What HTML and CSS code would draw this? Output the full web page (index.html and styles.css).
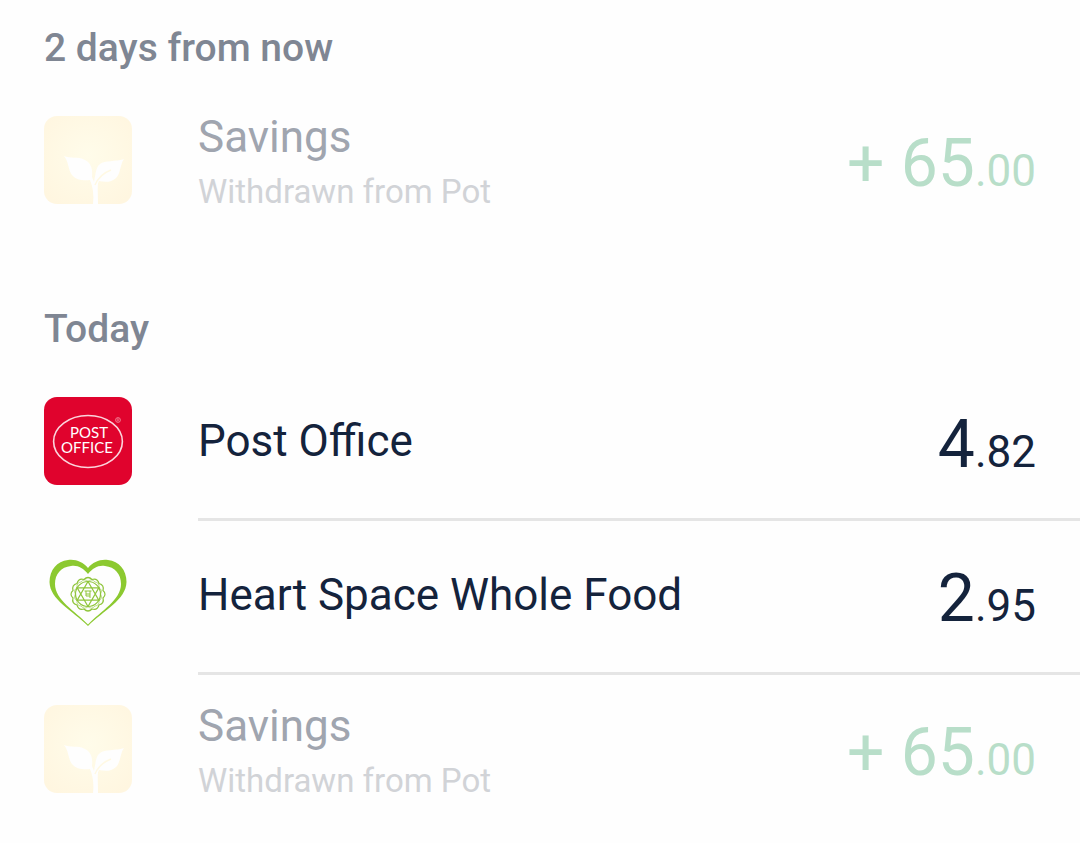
FILE: index.html
```html
<!DOCTYPE html>
<html lang="en">

	<head>
		<meta charset="UTF-8" />
		<meta name="viewport" content="width=device-width, initial-scale=1" />
		<title>Transactions</title>
		<link rel="stylesheet" href="styles.css">
	</head>

	<body>
		<!-- shared pot icon -->
		<svg class="defs" width="0" height="0" aria-hidden="true">
			<radialGradient id="potGlow" cx="50%" cy="45%" r="65%">
				<stop offset="0" stop-color="#fffcea" />
				<stop offset="1" stop-color="#fff6e0" />
			</radialGradient>
			<symbol id="pot" viewBox="0 0 88 88">
				<rect width="88" height="88" rx="13" fill="url(#potGlow)" />
				<path fill="#fefefe" d="M20 40C26 43 34 40 41 44C47 47 49 53 48 61L50 66C52 56 52 51 56 48C61 44 71 46 80 43C76 48 77 57 72 62C67 67 60 66 55 65C53 68 54 75 54 88H49C50 79 49 71 46 64C40 65 32 64 28 59C24 54 25 46 20 40Z" />
				<path fill="none" stroke="#fff9e4" stroke-width="1.5" d="M51 69C54 62 59 57 67 54" />
			</symbol>
		</svg>

		<div class="feed">
			<section class="day">
				<h2>2 days from now</h2>
				<ul>
					<li class="item pending">
						<svg class="icon" aria-hidden="true"><use href="#pot" /></svg>
						<div class="info">
							<div class="text">
								<p class="name">Savings</p>
								<p class="note">Withdrawn from Pot</p>
							</div>
							<p class="amount">+ 65<span>.00</span></p>
						</div>
					</li>
				</ul>
			</section>

			<section class="day">
				<h2>Today</h2>
				<ul>
					<li class="item">
						<svg class="icon" viewBox="0 0 88 88" aria-hidden="true">
							<rect width="88" height="88" rx="13" fill="#e0032d" />
							<ellipse cx="44" cy="44.5" rx="34.4" ry="26" fill="none" stroke="#fbd5dc" stroke-width="1.6" />
							<text class="logo" text-anchor="middle"><tspan x="45" y="41">POST</tspan><tspan x="43" y="56">OFFICE</tspan></text>
							<circle cx="74" cy="23" r="2.4" fill="none" stroke="#f296a6" stroke-width="0.8" />
							<path d="M73.3 24.5V21.7H74.2A0.7 0.7 0 0 1 74.2 23.1H73.3M74.2 23.1L75 24.5" fill="none" stroke="#f296a6" stroke-width="0.5" />
						</svg>
						<div class="info">
							<div class="text">
								<p class="name">Post Office</p>
							</div>
							<p class="amount">4<span>.82</span></p>
						</div>
					</li>
					<li class="item">
						<svg class="icon" viewBox="0 0 88 88" aria-hidden="true">
							<path fill="#8cc930" fill-rule="evenodd" d="M44 17C49 11 56 8 64 9C75 10 82.500 19 82.500 31C82 49 60 59 44 75C28 59 6 49 5.500 31C5.500 19 13 10 24 9C32 8 39 11 44 17ZM44 23C39 17 34 14 27 15C17 16 11 23 11 33C11 49 31 60 44 73.500C57 60 77 49 77 33C77 23 71 16 61 15C54 14 49 17 44 23Z" />
							<g fill="none" stroke="#8fc53a" stroke-width="1.2">
								<circle cx="44" cy="43" r="12.500" />
								<path d="M44 30.500L54.800 49.200H33.200ZM44 55.500L33.200 36.800H54.800Z" />
								<path d="M40 28.500Q44 24.500 48 28.500Q53.500 27 55 32.500Q60.500 34 59 39.500Q63 43 59 47Q60.500 52.500 55 54Q53.500 59.500 48 58Q44 62 40 58Q34.500 59.500 33 54Q27.500 52.500 29 47Q25 43 29 39.500Q27.500 34 33 32.500Q34.500 27 40 28.500Z" />
								<path d="M37 31Q40.500 27 44 30.500Q47.500 27 51 31Q55.500 31.500 55 36.500Q59 39.500 56.500 43Q59 47 55 50Q55.500 54.500 51 55Q47.500 59 44 55.500Q40.500 59 37 55Q32.500 54.500 33 50Q29 47 31.500 43Q29 39.500 33 36.500Q32.500 31.500 37 31Z" stroke-width="0.600" />
								<path d="M40.500 40H47.500M46 40V47M42 40V45H46M42 43H46" stroke-width="1" />
							</g>
						</svg>
						<div class="info">
							<div class="text">
								<p class="name">Heart Space Whole Food</p>
							</div>
							<p class="amount">2<span>.95</span></p>
						</div>
					</li>
					<li class="item pending">
						<svg class="icon" aria-hidden="true"><use href="#pot" /></svg>
						<div class="info">
							<div class="text">
								<p class="name">Savings</p>
								<p class="note">Withdrawn from Pot</p>
							</div>
							<p class="amount">+ 65<span>.00</span></p>
						</div>
					</li>
				</ul>
			</section>
		</div>
	</body>

</html>
```
FILE: styles.css
```css
body,
h2,
ul,
p {
	margin: 0;
	padding: 0;
}

body {
	background: #fefefe;
	color: #14233c;
	font-family: Roboto, "Liberation Sans", sans-serif;
}

li {
	list-style: none;
}

.defs {
	position: absolute;
}

.day {
	margin-bottom: 41px;
}

.day:last-child {
	margin-bottom: 0;
}

.day h2 {
	padding: 24px 44px 14px;
	font-size: 39px;
	font-weight: 500;
	line-height: 48px;
	color: #7f8693;
}

.item {
	display: flex;
	padding-left: 44px;
}

.icon {
	flex: none;
	width: 88px;
	height: 88px;
	margin: 30px 66px 0 0;
}

.info {
	flex: 1;
	display: flex;
	justify-content: space-between;
	align-items: center;
	height: 148px;
	padding-right: 44px;
	border-bottom: 3px solid #e5e5e5;
	padding-bottom: 3px;
}

.item:last-child .info {
	border-bottom-color: transparent;
}

.name {
	font-size: 44px;
	line-height: 50px;
}

.note {
	margin-top: 13px;
	font-size: 33px;
	line-height: 34px;
	color: #d1d3d7;
}

.amount {
	padding-top: 14px;
	font-size: 66px;
	line-height: 76px;
	white-space: nowrap;
}

.amount span {
	font-size: 44px;
}

.pending .name {
	color: #a0a5af;
}

.pending .amount {
	color: #b8dec9;
}

.logo {
	font-family: Lato, sans-serif;
	font-size: 15px;
	fill: #fff;
}
```
